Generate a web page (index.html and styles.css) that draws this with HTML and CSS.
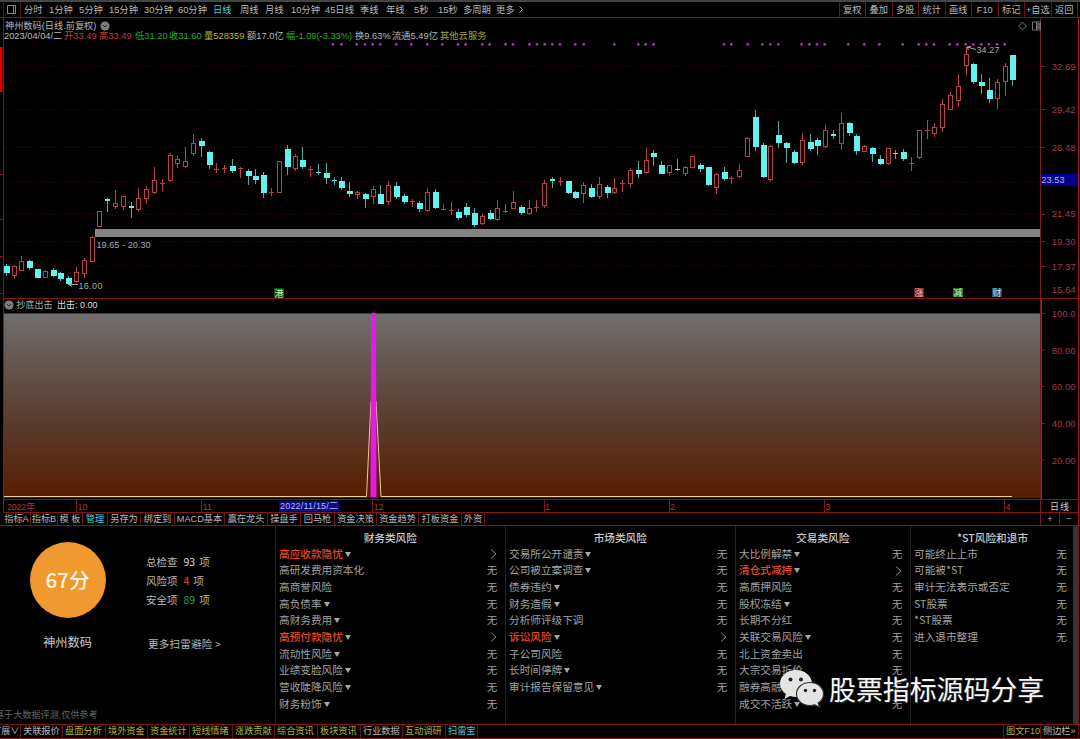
FILE: index.html
```html
<!DOCTYPE html>
<html lang="zh-CN">
<head>
<meta charset="utf-8">
<title>神州数码 日线</title>
<link rel="stylesheet" href="styles.css">
</head>
<body>
<div class="app">
  <header class="toolbar">
    <div class="layout-btn"><svg width="10" height="9" viewBox="0 0 10 9"><path d="M.5 .5h8v8h-8zM6.500 1v7" fill="none" stroke="#888"/></svg></div>
    <nav class="periods"><span>分时</span><span>1分钟</span><span>5分钟</span><span>15分钟</span><span>30分钟</span><span>60分钟</span><span class="on">日线</span><span>周线</span><span>月线</span><span>10分钟</span><span>45日线</span><span>季线</span><span>年线</span><span>5秒</span><span>15秒</span><span>多周期</span><span>更多<svg class="more" width="4" height="7" viewBox="0 0 4 7"><path d="M.5 .5l3 3-3 3" fill="none" stroke="#aaa"/></svg></span></nav>
    <div class="actions"><span>复权</span><span>叠加</span><span>多股</span><span>统计</span><span>画线</span><span>F10</span><span>标记</span><span>+自选</span><span>返回</span></div>
  </header>

  <section class="quote">
    <div class="quote-main">
      <div class="name-row">
        <span class="stock">神州数码(日线.前复权)</span>
        <svg width="10" height="10" viewBox="0 0 10 10"><circle cx="5" cy="5" r="4.600" fill="#7d7d7d"/><path d="M3 4l2 2 2-2" fill="none" stroke="#222"/></svg>
        <svg class="tools" width="24" height="10" viewBox="0 0 24 10" fill="none" stroke="#777"><path d="M4.500 1l3.700 4-3.700 4L.8 5z"/><path d="M14.500 1h8v8h-8z"/><path d="M19 2h3v6h-3z" fill="#555" stroke="none"/><path d="M18.500 1v8"/></svg>
      </div>
      <div class="info-row"><span>2023/04/04/二</span><span class="up">开33.49</span><span class="up">高33.49</span><span class="down">低31.20</span><span class="down">收31.60</span><span class="vol">量528359</span><span>额17.0亿</span><span class="down">幅-1.09(-3.33%)</span><span>换9.63%</span><span>流通5.49亿</span><span class="cloud">其他云服务</span></div>
    </div>
  </section>

  <svg class="chart" id="chart" width="1080" height="471" viewBox="0 42 1080 471">
    <defs>
      <linearGradient id="heat" x1="0" y1="0" x2="0" y2="1"><stop offset="0" stop-color="#716e6f"/><stop offset=".3" stop-color="#62544b"/><stop offset=".6" stop-color="#593b2b"/><stop offset="1" stop-color="#591d00"/></linearGradient>
    </defs>
    <path d="M0 47h2.500v45H0z" fill="#e00000"/>
    <g id="grid"></g>
    <rect x="95" y="229" width="946" height="8" fill="#858384"/>
    <g id="dots" fill="#b233bd"></g>
    <g id="candles" shape-rendering="crispEdges"></g>
    <g stroke="#aaa" fill="none"><path d="M967 47l9 2.500M967 47l4-.5M967 47l1.500 3"/><path d="M69 284.500h9M69 284.500l3-2M69 284.500l3 2"/></g>
    <g class="note"><text x="976.500" y="53" textLength="23">34.27</text><text x="78.500" y="289" textLength="24">16.00</text><text x="96.500" y="247.500" textLength="54">19.65 - 20.30</text></g>
    <g class="badge">
      <rect x="274" y="288" width="10" height="10" fill="#174d17"/><text x="274.500" y="296.500" fill="#b6ffb0">港</text>
      <rect x="914" y="288" width="10" height="9" fill="#662020"/><text x="914.500" y="296" fill="#ffc8c8">涨</text>
      <rect x="953" y="288" width="10" height="9" fill="#226622"/><text x="953.500" y="296" fill="#c8ffc0">减</text>
      <rect x="992" y="288" width="10" height="9" fill="#1d4a66"/><text x="992.500" y="296" fill="#b9e4ff">财</text>
    </g>

    <circle cx="9" cy="305" r="4.600" fill="#7d7d7d"/><path d="M7 304l2 2 2-2" fill="none" stroke="#222"/>
    <text class="pane" x="16.500" y="308.300" textLength="36" fill="#aaa">抄底出击</text>
    <text class="pane" x="57" y="308.300" textLength="40.500" fill="#ddd">出击: 0.00</text>
    <rect x="4" y="313.500" width="1036" height="184.500" fill="url(#heat)"/>
    <path d="M4 496.500H366.500L371 401M376 401L381 496.500H1012" fill="none" stroke="#eec79a"/>
    <path d="M371 314q2.500-3 5 0l.5 183h-6z" fill="#e619e6"/>

    <g fill="none" stroke="#7c1620" shape-rendering="crispEdges">
      <path d="M3.500 42V513M1040.500 42V513M0 174.500h3M0 219.500h3M0 256.500h3M0 293.500h3"/>
      <path d="M4 298.500H1078M4 499.500H1078M4 512.500H1078" stroke="#8a1414"/>
      <path d="M1041.500 299V499" stroke="#b51a22"/>
      <path d="M76.500 500v12M201.500 500v12M372.500 500v12M544.500 500v12M669.500 500v12M824.500 500v12M1004.500 500v12"/>
      <path d="M1078.500 42V513" stroke="#b01018"/>
    </g>
    <g class="scale" id="scale"></g>
    <rect x="1041" y="174" width="37" height="12" fill="#00008c"/>
    <text class="cursor" x="1041.500" y="183" textLength="23">23.53</text>
    <g class="date"><text x="7" y="509.500" textLength="28">2022年</text><text x="77.500" y="509.500">10</text><text x="202.500" y="509.500">11</text><text x="373.500" y="509.500">12</text><text x="545" y="509.500">1</text><text x="670" y="509.500">2</text><text x="825.500" y="509.500">3</text><text x="1005.500" y="509.500">4</text></g>
    <rect x="279" y="501" width="60" height="10" fill="#0b0b8c"/>
    <text class="cursor" x="280" y="509.200" textLength="58">2022/11/15/二</text>
    <text class="pane" x="1050" y="509.500" textLength="19" fill="#ccc">日线</text>
  </svg>

  <nav class="tabs">
    <div class="tab-list"><span>指标A</span><span>指标B</span><span>模 板</span><span class="on">管理</span><span>另存为</span><span>绑定到</span><span>MACD基本</span><span>赢在龙头</span><span>操盘手</span><span>回马枪</span><span>资金决策</span><span>资金趋势</span><span>打板资金</span><span>外资</span></div>
    <div class="zoomers"><span>+</span><span>−</span></div>
  </nav>

  <main class="risk">
    <section class="summary">
      <div class="score-box"><div class="score">67分</div><div class="company">神州数码</div></div>
      <div class="stats"><p>总检查<b>93</b>项</p><p>风险项<b class="bad">4</b>项</p><p>安全项<b class="good">89</b>项</p><a>更多扫雷避险 &gt;</a></div>
      <div class="disclaimer">基于大数据评测,仅供参考</div>
    </section>
    <div class="lists" id="lists"></div>
    <div class="scrollbar"></div>
    <div class="watermark">
      <svg width="44" height="38" viewBox="0 0 44 38">
        <path d="M16 0C7 0 0 6 0 13.500c0 4.300 2.300 8 6 10.500l-1.500 5 5.500-3c2 .6 4 .9 6 .9 8.800 0 16-6 16-13.400S24.800 0 16 0z" fill="#e4e4e4"/>
        <circle cx="10.500" cy="9.500" r="2" fill="#222"/><circle cx="21" cy="9.500" r="2" fill="#222"/>
        <path d="M30 12.500c-7.500 0-13.500 5-13.500 11.500S22.500 35.500 30 35.500c1.700 0 3.300-.3 4.800-.7l4.700 2.500-1.300-4.200c3.300-2.200 5.300-5.400 5.300-9.100 0-6.500-6-11.500-13.500-11.500z" fill="#e4e4e4" stroke="#333" stroke-width="1.200"/>
        <circle cx="25.500" cy="20.500" r="1.700" fill="#222"/><circle cx="34.500" cy="20.500" r="1.700" fill="#222"/>
      </svg>
      <span>股票指标源码分享</span>
    </div>
  </main>

  <footer class="bottom">
    <div class="bottom-list"><span class="first">扩展∨</span><span>关联报价</span><span class="y">盘面分析</span><span class="y">境外资金</span><span class="y">资金统计</span><span class="y">短线情绪</span><span class="y">涨跌贡献</span><span class="y">综合资讯</span><span class="y">板块资讯</span><span>行业数据</span><span class="y">互动调研</span><span class="on">扫雷宝</span></div>
    <div class="bottom-end"><span class="y">图文F10</span><span>侧边栏»</span></div>
  </footer>
</div>
<script src="app.js"></script>
</body>
</html>
```
FILE: styles.css
```css
* { box-sizing: border-box; }
body { margin: 0; background: #000; color: #b8b8b8; font: 9px/12px "Liberation Sans", "Noto Sans CJK SC", sans-serif; }
.app { width: 1080px; height: 739px; overflow: hidden; display: flex; flex-direction: column; white-space: nowrap; background: #000; }
.app > * { flex: none; }
p { margin: 0; }
.on { color: #4cc9d2; }
.y { color: #acb03a; }

.toolbar { height: 18px; border-top: 2px solid #444; border-bottom: 1px solid #7c1618; display: flex; justify-content: space-between; line-height: 16px; }
.layout-btn { width: 18px; margin: 0 3px 0 3px; border-left: 1px solid #5b1015; border-right: 1px solid #5b1015; padding: 3px 0 0 3px; line-height: 0; }
.periods { flex: 1; display: grid; grid-template-columns: 25px 30px 30px 35px 34px 35px 27px 25px 26px 34px 35px 26px 28px 24px 25px 33px 60px; font-size: 9.3px; }
.more { margin-left: 4px; }
.actions { display: grid; grid-template-columns: repeat(9, 26.5px); text-align: center; font-size: 9.2px; margin-right: 2px; border-right: 1px solid #7c1618; }
.actions span { border-left: 1px solid #6b1219; }

.quote { height: 24px; padding: 0 1px 0 3px; }
.quote-main { height: 24px; border-left: 1px solid #7c1620; border-right: 1px solid #b01018; background: linear-gradient(#7c1620, #7c1620) 1036px 0 / 1px 24px no-repeat; }
.name-row { display: flex; align-items: center; gap: 4px; height: 13px; padding: 2px 36px 0 1px; }
.stock { width: 91px; font-size: 9.2px; }
.tools { margin-left: auto; }
.info-row { display: grid; height: 11px; line-height: 11px; grid-template-columns: 60px 35px 36px 34px 35px 43px 39px 69px 37px 48px 50px; font-size: 9.3px; }
.vol { color: #b8b23c; }
.up { color: #c83b43; }
.down { color: #22ae2b; }
.cloud { color: #a5a03d; }

.chart { display: block; }
.chart text { font-family: "Liberation Sans", "Noto Sans CJK SC", sans-serif; font-size: 9px; }
.note text { fill: #aaa; }
.badge text { font-size: 9px; }
.scale text { fill: #a83844; text-anchor: end; font-size: 9.5px; }
.date text { fill: #a8343c; }
.chart .cursor { fill: #b6b6ea; font-size: 9px; }

.tabs { height: 13px; display: flex; justify-content: space-between; border-bottom: 1px solid #7c1618; padding-left: 3px; line-height: 12px; font-size: 9.2px; }
.tab-list { display: grid; grid-template-columns: 28px 27px 25px 25px 33px 34px 50px 43px 33px 34px 42px 42px 43px 23px; text-align: center; }
.tab-list span { border-right: 1px solid #6b1219; }
.zoomers { display: grid; grid-template-columns: 19px 19px; margin-right: 1px; text-align: center; border-right: 1px solid #b01018; }
.zoomers span { border-left: 1px solid #7c1620; }

.risk { position: relative; height: 198px; display: flex; background: #000; }
.summary { width: 276px; display: grid; grid-template-columns: 136px 1fr; grid-template-rows: 180px 18px; border-right: 1px solid #242424; }
.score-box { display: flex; flex-direction: column; align-items: center; padding: 16px 1px 0 0; }
.score { width: 76px; height: 76px; border-radius: 50%; background: #f0992f; color: #fff5e6; font: 500 20.500px/75px "Noto Sans CJK SC", sans-serif; text-align: center; }
.company { margin-top: 17px; font-size: 12.200px; line-height: 16px; color: #c8c8c8; }
.stats { padding: 27px 0 0 10px; font: 10.500px/18.800px "Noto Sans CJK SC", sans-serif; }
.stats b { font-weight: 400; margin: 0 4px 0 6px; color: #ddd; }
.stats .bad { color: #f0502e; }
.stats .good { color: #23a05b; }
.stats a { display: block; margin: 26px 0 0 2px; letter-spacing: .25px; }
.disclaimer { grid-column: 1 / 3; margin-left: -5px; font-size: 9.1px; color: #666; line-height: 18px; }

.lists { display: grid; grid-template-columns: 230px 230px 175px 162px; font: 10.650px/16.680px "Noto Sans CJK SC", sans-serif; }
.risk-col { padding: 2.500px 7.500px 0 3px; border-right: 1px solid #242424; color: #a2a2a2; }
.risk-col:last-child { border-right: 0; padding-right: 6px; }
.risk-col h3 { margin: 0; padding-left: 4px; text-align: center; font-size: 10.650px; font-weight: 500; color: #c9c9c9; line-height: 17px; }
.risk-row { display: flex; justify-content: space-between; align-items: center; height: 16.680px; }
.risk-row.hot .label { color: #e04a24; font-weight: 500; }
.tri { display: inline-block; margin-left: 2px; border: 3px solid transparent; border-top: 5px solid #a8a8a8; border-bottom: 0; vertical-align: 1px; }
.arrow { margin-right: 1px; }
.scrollbar { width: 5px; background: #343436; border-right: 1px solid #6e1018; flex: 1; margin-right: 1px; }
.watermark { position: absolute; left: 780px; top: 143px; display: flex; gap: 5px; align-items: center; color: #f6f6f6; font: 26.900px/40px "Noto Sans CJK SC", sans-serif; text-shadow: 1px 1px 1px #333; }

.bottom { height: 15px; border-top: 1px solid #7c1618; border-bottom: 1px solid #8a1a20; display: flex; justify-content: space-between; line-height: 13px; font-size: 9.2px; }
.bottom-list { display: grid; grid-template-columns: 21px 42px 43px 42px 42px 43px 42px 43px 43px 42px 43px 32px; }
.bottom-list span, .bottom-end span { border-right: 1px solid #6b1219; padding-left: 2px; overflow: hidden; }
.bottom-list .first { padding: 0; text-indent: -8px; }
.bottom-end { display: grid; grid-template-columns: 37px 38px; border-left: 1px solid #6b1219; margin-right: 1px; }
```
FILE: app.js
```js
// Daily bars: kind (c = falling, r = rising), high, body top, body bottom, low,
// in thirds of a pixel below y = 130.
const bars = `c 402 408 430 438|r 404 408 438 448|r 377 394 422 424|c 390 393 415 421|c 417 418 445 445|r 421 422 445 445|c 413 421 438 440|c 427 430 446 454|c 437 444 462 466|r 410 427 455 460|r 384 390 433 443|r 318 320 395 395|r 242 243 291 292|c 205 208 212 246|r 180 220 230 238|r 197 199 231 240|c 215 229 234 263|r 175 204 239 245|r 167 177 207 222|r 110 150 189 193|r 146 159 165 184|r 70 76 152 156|r 75 88 101 113|r 52 93 112 115|r 11 40 73 77|c 25 34 48 82|c 62 67 105 117|r 100 116 119 130|r 104 115 118 130|c 87 108 122 128|r 112 115 121 143|c 117 123 139 165|c 117 139 151 163|c 126 135 188 204|r 174 186 189 198|r 94 94 188 189|c 45 57 110 135|r 71 79 118 124|c 51 90 110 116|r 107 118 122 141|c 102 125 128 136|c 100 128 145 162|c 140 150 153 165|c 141 152 173 180|c 155 182 192 200|r 184 187 195 207|c 190 192 208 233|r 167 177 201 221|c 165 192 221 223|r 153 166 215 224|c 155 169 200 206|c 191 198 215 221|r 207 212 216 231|c 212 218 237 247|r 174 187 244 246|c 178 186 235 236|r 221 236 238 240|r 216 240 243 254|c 236 245 263 270|c 218 231 255 262|c 234 250 284 291|r 252 258 283 285|c 240 250 266 271|r 211 233 271 272|r 221 242 246 249|r 183 217 236 238|c 225 231 249 254|r 210 234 253 256|r 209 231 235 246|r 151 159 228 234|c 141 147 153 174|r 141 154 157 168|c 152 154 188 193|c 183 186 203 206|r 156 165 191 218|c 162 175 201 205|r 142 161 200 208|c 166 171 189 204|r 143 175 190 191|r 150 160 165 187|r 113 121 163 174|c 94 120 132 143|r 55 91 130 132|c 60 68 80 109|c 94 106 132 133|r 104 106 129 137|c 87 117 120 123|r 107 112 131 138|r 78 79 113 114|c 98 105 118 125|c 110 111 166 168|r 130 132 173 191|c 110 127 147 153|r 139 143 150 162|r 102 120 142 143|r 22 23 82 82|c -60 -39 50 63|c 38 45 142 145|r 46 48 150 157|c -26 15 39 53|c 36 40 55 99|c 60 67 98 101|r 8 30 100 104|c 12 35 58 62|c 24 29 47 74|r -15 0 52 53|c 0 13 17 28|r -50 -20 41 60|c -24 -21 8 18|c 11 17 62 76|r 44 47 65 65|c 50 53 71 97|c 76 88 103 104|r 53 54 103 104|c 60 69 73 88|c 58 65 88 92|r 82 99 102 124|r 1 1 85 86|r -30 0 3 27|r -22 -8 12 20|r -92 -77 -6 5|r -113 -104 -61 -60|r -167 -131 -86 -69|r -250 -228 -191 -164|c -202 -198 -143 -138|c -168 -144 -132 -109|c -155 -120 -94 -80|r -153 -143 -94 -63|r -200 -191 -143 -103|c -224 -224 -149 -133`.split('|');
const py = v => Math.round(130 + v / 3);
const red = '#b84248';
document.getElementById('candles').innerHTML = bars.map((b, i) => {
  const [k, ...v] = b.split(' ');
  const [hi, top, bot, lo] = v.map(n => py(+n));
  const cx = Math.floor(6.3 + i * 7.803);
  const h = Math.max(1, bot - top);
  if (k === 'c') {
    return `<rect x="${cx}" y="${hi}" width="1" height="${lo - hi}" fill="#4fa9a6"/><rect x="${cx - 2}" y="${top}" width="${h > 2 ? 6 : 5}" height="${h}" fill="#61f3f0"/>`;
  }
  const body = h < 3
    ? `<rect x="${cx - 2}" y="${top}" width="5" height="1" fill="${red}"/>`
    : `<rect x="${cx - 1.5}" y="${top + 0.5}" width="4" height="${h - 1}" fill="#000" stroke="${red}"/>`;
  return `<rect x="${cx}" y="${hi}" width="1" height="${Math.max(1, lo - hi)}" fill="${red}"/>${body}`;
}).join('');

const dotX = [333, 341.5]
  .concat([110,135,158,181,229,274,322,367,414,437,487,509,557,579,628,651,674,697,720,766,791,883,955,977,1001].map(x => 320 + x / 3))
  .concat([12,34,83,127,151,175,245,268,291,314,385,433,478,548,596,619,642,689,712,737,760,784,807,831,854].map(x => 720 + x / 3));
document.getElementById('dots').innerHTML = dotX.map(x => `<circle cx="${x}" cy="44.3" r="1.35"/>`).join('');

const gridY = [66, 109, 147, 182, 214, 241, 266];
document.getElementById('grid').innerHTML = gridY.map(y =>
  `<path d="M4 ${y}.5H1040" stroke="#3a0d10" stroke-dasharray="1 2"/><path d="M1041 ${y}.5h4" stroke="#7c1620"/>`).join('');

const labels = [['32.69', 66], ['29.42', 109.5], ['26.48', 147.5], ['21.45', 213.5], ['19.30', 241.5], ['17.37', 266.5], ['15.64', 289.5],
  ['100.0', 313.5], ['80.00', 350], ['60.00', 386.5], ['40.00', 423.5], ['20.00', 460]];
document.getElementById('scale').innerHTML = labels.map(([t, y]) =>
  `<text x="1075.5" y="${y + 3.5}">${t}</text>` + (y > 300 ? `<path d="M1042 ${y}h3" stroke="#7c1620"/>` : '')).join('');

// Flags: "v" = expandable, "!" = risk found.
const columns = [
  ['财务类风险', '高应收款隐忧v!|高研发费用资本化|高商誉风险|高负债率v|高财务费用v|高预付款隐忧v!|流动性风险v|业绩变脸风险v|营收陡降风险v|财务粉饰v'],
  ['市场类风险', '交易所公开谴责v|公司被立案调查v|债券违约v|财务造假v|分析师评级下调|诉讼风险v!|子公司风险|长时间停牌v|审计报告保留意见v'],
  ['交易类风险', '大比例解禁v|清仓式减持v!|高质押风险|股权冻结v|长期不分红|关联交易风险v|北上资金卖出|大宗交易折价|融券高融v|成交不活跃v'],
  ['*ST风险和退市', '可能终止上市|可能被*ST|审计无法表示或否定|ST股票|*ST股票|进入退市整理'],
];
const arrow = '<svg class="arrow" width="7" height="10" viewBox="0 0 7 10"><path d="M1 .5l5 4.500-5 4.500" fill="none" stroke="#888"/></svg>';
document.getElementById('lists').innerHTML = columns.map(([title, rows]) =>
  `<section class="risk-col"><h3>${title}</h3>` + rows.split('|').map(r => {
    const hot = r.includes('!');
    return `<div class="risk-row${hot ? ' hot' : ''}"><span class="label">${r.replace(/[v!]/g, '')}${r.includes('v') ? '<i class="tri"></i>' : ''}</span>${hot ? arrow : '<span>无</span>'}</div>`;
  }).join('') + '</section>').join('');
```
